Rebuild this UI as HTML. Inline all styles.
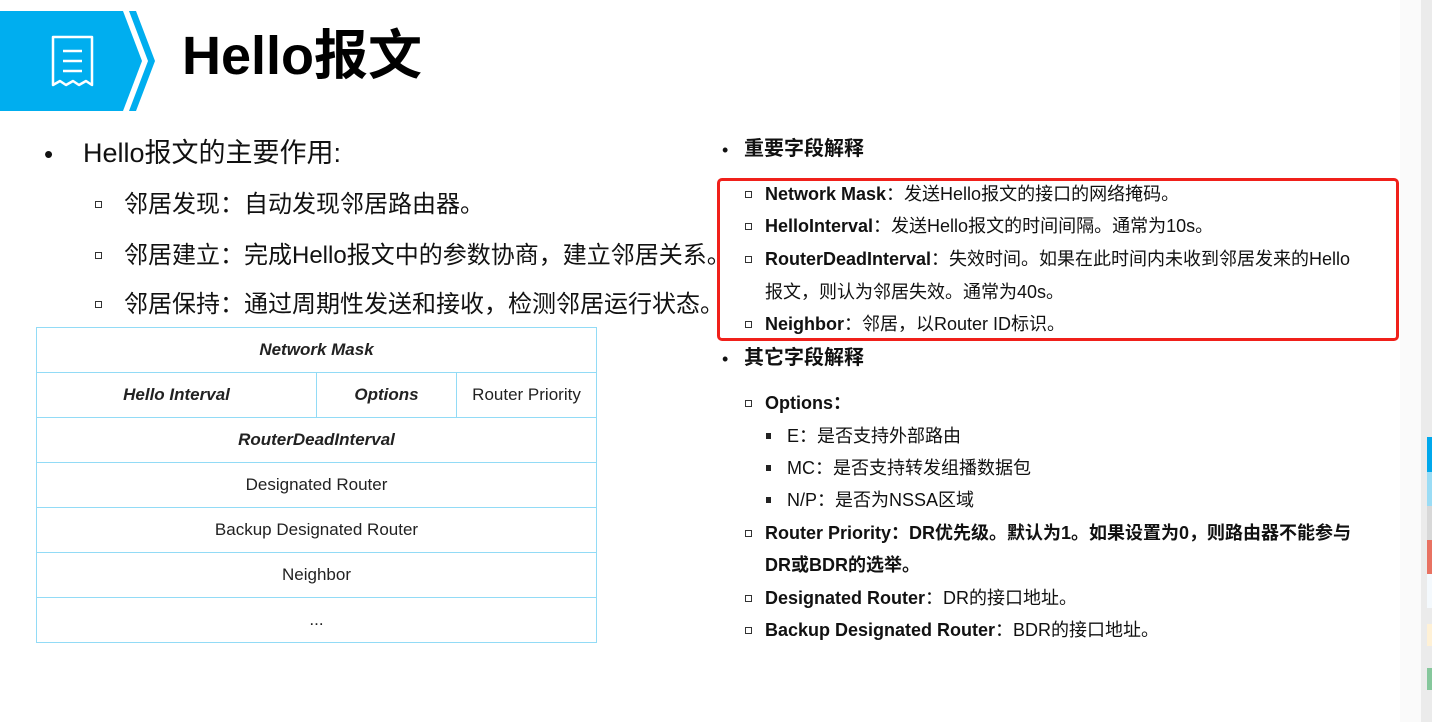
<!DOCTYPE html>
<html><head><meta charset="utf-8"><style>
body{margin:0;width:1432px;height:722px;background:#fff;position:relative;overflow:hidden;font-family:"Liberation Sans","Noto Sans CJK SC",sans-serif;color:#111}
.a{position:absolute;white-space:nowrap;line-height:1}
.sq{position:absolute;width:5px;height:5px;border:1px solid #333}
.fs{position:absolute;width:5px;height:6px;background:#222}
table{position:absolute;left:36px;top:327px;width:561px;border-collapse:collapse}
td{border:1px solid #92dbf6;height:44px;padding:0;text-align:center;font-size:17px;color:#222}
td.b{font-weight:bold;font-style:italic}
</style></head><body>
<svg class="a" style="left:0;top:11px" width="160" height="101">
<polygon points="0,0 123,0 142,50 123,100 0,100" fill="#00aeef"/>
<polygon points="129,0 136,0 155,50 136,100 129,100 148,50" fill="#00aeef"/>
<g fill="none" stroke="#fff" stroke-width="2.5">
<path d="M53,26 h39 v48 l-6,-4 l-7,4 l-6,-4 l-7,4 l-6,-4 l-7,4 z" stroke-linejoin="round"/>
<path d="M63,40 h19 M63,50 h19 M63,60 h19"/></g></svg>
<div class="a" style="left:182px;top:29px;font-size:54px;font-weight:bold;color:#000">Hello报文</div>

<div class="a" style="left:44px;top:141px;font-size:26px">•</div>
<div class="a" style="left:83px;top:140px;font-size:27px">Hello报文的主要作用:</div>
<div class="sq" style="left:95px;top:201px"></div><div class="a" style="left:124px;top:193px;font-size:24px">邻居发现：自动发现邻居路由器。</div>
<div class="sq" style="left:95px;top:252px"></div><div class="a" style="left:124px;top:244px;font-size:24px">邻居建立：完成Hello报文中的参数协商，建立邻居关系。</div>
<div class="sq" style="left:95px;top:301px"></div><div class="a" style="left:124px;top:293px;font-size:24px">邻居保持：通过周期性发送和接收，检测邻居运行状态。</div>

<table>
<tr><td colspan="3" class="b">Network Mask</td></tr>
<tr><td class="b" style="width:279px">Hello Interval</td><td class="b" style="width:139px">Options</td><td>Router Priority</td></tr>
<tr><td colspan="3" class="b">RouterDeadInterval</td></tr>
<tr><td colspan="3">Designated Router</td></tr>
<tr><td colspan="3">Backup Designated Router</td></tr>
<tr><td colspan="3">Neighbor</td></tr>
<tr><td colspan="3">...</td></tr>
</table>

<div class="a" style="left:722px;top:141px;font-size:18px">•</div>
<div class="a" style="left:744px;top:139px;font-size:20px;font-weight:bold">重要字段解释</div>
<div style="position:absolute;left:717px;top:178px;width:676px;height:157px;border:3px solid #f0201a;border-radius:5px"></div>
<div class="sq" style="left:745px;top:191px"></div><div class="a" style="left:765px;top:185px;font-size:18px"><b>Network Mask</b>：发送Hello报文的接口的网络掩码。</div>
<div class="sq" style="left:745px;top:223px"></div><div class="a" style="left:765px;top:217px;font-size:18px"><b>HelloInterval</b>：发送Hello报文的时间间隔。通常为10s。</div>
<div class="sq" style="left:745px;top:256px"></div><div class="a" style="left:765px;top:250px;font-size:18px"><b>RouterDeadInterval</b>：失效时间。如果在此时间内未收到邻居发来的Hello</div>
<div class="a" style="left:765px;top:283px;font-size:18px">报文，则认为邻居失效。通常为40s。</div>
<div class="sq" style="left:745px;top:321px"></div><div class="a" style="left:765px;top:315px;font-size:18px"><b>Neighbor</b>：邻居，以Router ID标识。</div>

<div class="a" style="left:722px;top:350px;font-size:18px">•</div>
<div class="a" style="left:744px;top:348px;font-size:20px;font-weight:bold">其它字段解释</div>
<div class="sq" style="left:745px;top:400px"></div><div class="a" style="left:765px;top:394px;font-size:18px;font-weight:bold">Options：</div>
<div class="fs" style="left:766px;top:433px"></div><div class="a" style="left:787px;top:427px;font-size:18px">E：是否支持外部路由</div>
<div class="fs" style="left:766px;top:465px"></div><div class="a" style="left:787px;top:459px;font-size:18px">MC：是否支持转发组播数据包</div>
<div class="fs" style="left:766px;top:497px"></div><div class="a" style="left:787px;top:491px;font-size:18px">N/P：是否为NSSA区域</div>
<div class="sq" style="left:745px;top:530px"></div><div class="a" style="left:765px;top:524px;font-size:18px;font-weight:bold">Router Priority：DR优先级。默认为1。如果设置为0，则路由器不能参与</div>
<div class="a" style="left:765px;top:556px;font-size:18px;font-weight:bold">DR或BDR的选举。</div>
<div class="sq" style="left:745px;top:595px"></div><div class="a" style="left:765px;top:589px;font-size:18px"><b>Designated Router</b>：DR的接口地址。</div>
<div class="sq" style="left:745px;top:627px"></div><div class="a" style="left:765px;top:621px;font-size:18px"><b>Backup Designated Router</b>：BDR的接口地址。</div>

<div style="position:absolute;left:1400px;top:0;width:21px;height:722px;background:#fafafa"></div>
<div style="position:absolute;left:1421px;top:0;width:11px;height:722px;background:#ebebeb"></div>
<div style="position:absolute;left:1427px;top:437px;width:5px;height:35px;background:#00a8ec"></div>
<div style="position:absolute;left:1427px;top:472px;width:5px;height:34px;background:#9adcf5"></div>
<div style="position:absolute;left:1427px;top:506px;width:5px;height:34px;background:#d8d8d8"></div>
<div style="position:absolute;left:1427px;top:540px;width:5px;height:34px;background:#e87262"></div>
<div style="position:absolute;left:1427px;top:574px;width:5px;height:34px;background:#f4f9fd"></div>
<div style="position:absolute;left:1427px;top:624px;width:5px;height:22px;background:#fff1d6"></div>
<div style="position:absolute;left:1427px;top:668px;width:5px;height:22px;background:#86c79c"></div>
</body></html>
